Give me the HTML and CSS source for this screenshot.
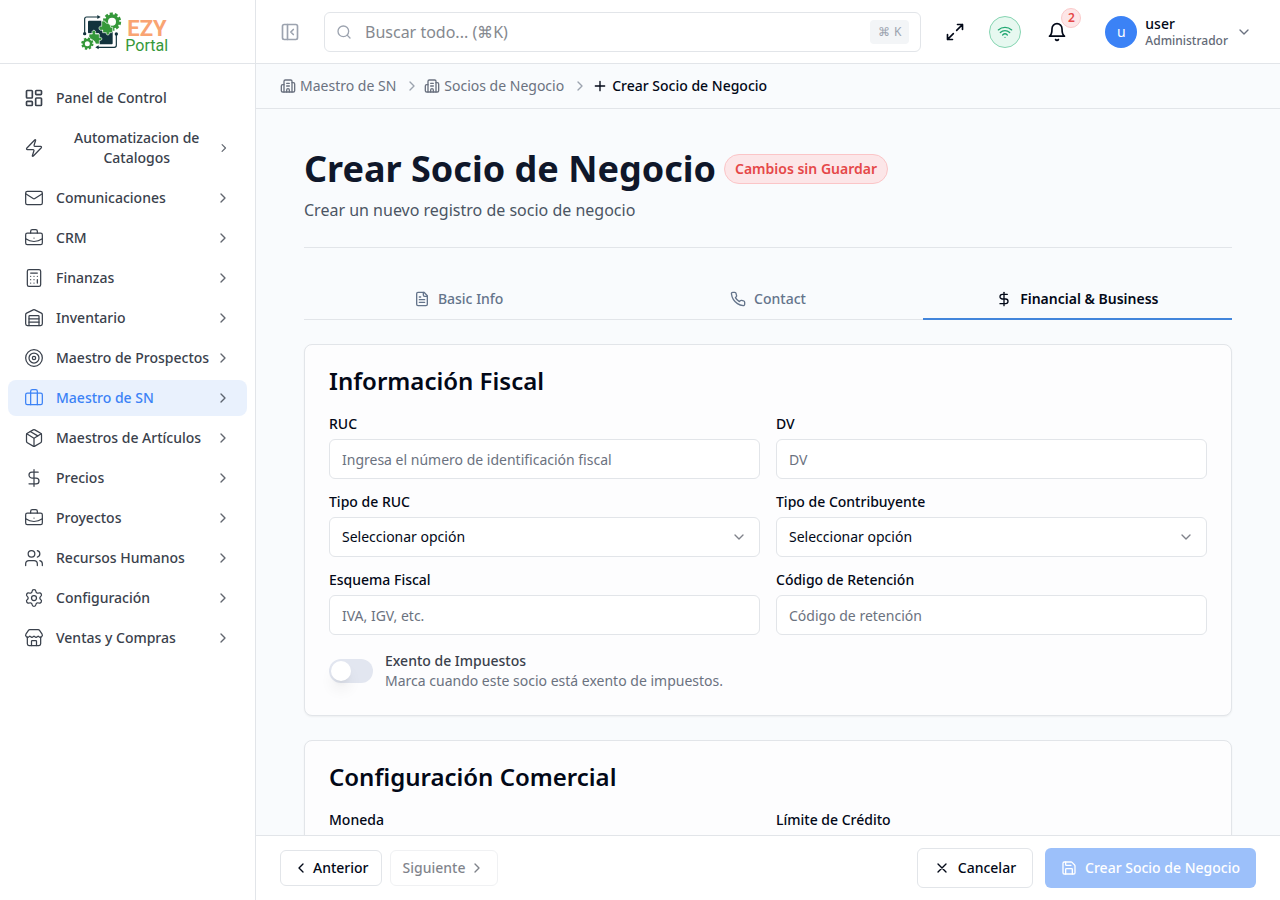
FILE: index.html
```html
<!DOCTYPE html>
<html lang="es">
<head>
<meta charset="utf-8">
<meta name="viewport" content="width=device-width, initial-scale=1">
<title>Crear Socio de Negocio - EZY Portal</title>
<link rel="stylesheet" href="styles.css">
</head>
<body>
<svg class="sprite" aria-hidden="true">
  <symbol id="i-dashboard" viewBox="0 0 24 24"><rect width="7" height="9" x="3" y="3" rx="1"/><rect width="7" height="5" x="14" y="3" rx="1"/><rect width="7" height="9" x="14" y="12" rx="1"/><rect width="7" height="5" x="3" y="16" rx="1"/></symbol>
  <symbol id="i-zap" viewBox="0 0 24 24"><path d="M4 14a1 1 0 0 1-.78-1.63l9.9-10.2a.5.5 0 0 1 .86.46l-1.92 6.02A1 1 0 0 0 13 10h7a1 1 0 0 1 .78 1.63l-9.9 10.2a.5.5 0 0 1-.86-.46l1.92-6.02A1 1 0 0 0 11 14z"/></symbol>
  <symbol id="i-mail" viewBox="0 0 24 24"><rect width="20" height="16" x="2" y="4" rx="2"/><path d="m22 7-8.97 5.7a1.94 1.94 0 0 1-2.06 0L2 7"/></symbol>
  <symbol id="i-business" viewBox="0 0 24 24"><path d="M12 12h.01"/><path d="M16 6V4a2 2 0 0 0-2-2h-4a2 2 0 0 0-2 2v2"/><path d="M22 13a18.15 18.15 0 0 1-20 0"/><rect width="20" height="14" x="2" y="6" rx="2"/></symbol>
  <symbol id="i-calculator" viewBox="0 0 24 24"><rect width="16" height="20" x="4" y="2" rx="2"/><path d="M8 6h8M16 14v4M16 10h.01M12 10h.01M8 10h.01M12 14h.01M8 14h.01M12 18h.01M8 18h.01"/></symbol>
  <symbol id="i-warehouse" viewBox="0 0 24 24"><path d="M18 21V10a1 1 0 0 0-1-1H7a1 1 0 0 0-1 1v11"/><path d="M22 19a2 2 0 0 1-2 2H4a2 2 0 0 1-2-2V8a2 2 0 0 1 1.132-1.803l7.95-3.974a2 2 0 0 1 1.837 0l7.948 3.974A2 2 0 0 1 22 8z"/><path d="M6 13h12M6 17h12"/></symbol>
  <symbol id="i-target" viewBox="0 0 24 24"><circle cx="12" cy="12" r="10"/><circle cx="12" cy="12" r="6"/><circle cx="12" cy="12" r="2"/></symbol>
  <symbol id="i-briefcase" viewBox="0 0 24 24"><path d="M16 20V4a2 2 0 0 0-2-2h-4a2 2 0 0 0-2 2v16"/><rect width="20" height="14" x="2" y="6" rx="2"/></symbol>
  <symbol id="i-package" viewBox="0 0 24 24"><path d="M11 21.73a2 2 0 0 0 2 0l7-4A2 2 0 0 0 21 16V8a2 2 0 0 0-1-1.73l-7-4a2 2 0 0 0-2 0l-7 4A2 2 0 0 0 3 8v8a2 2 0 0 0 1 1.73z"/><path d="M12 22V12"/><path d="m3.3 7 7.703 4.734a2 2 0 0 0 1.994 0L20.7 7"/><path d="m7.5 4.27 9 5.15"/></symbol>
  <symbol id="i-dollar" viewBox="0 0 24 24"><path d="M12 2v20"/><path d="M17 5H9.5a3.5 3.5 0 0 0 0 7h5a3.5 3.5 0 0 1 0 7H6"/></symbol>
  <symbol id="i-users" viewBox="0 0 24 24"><path d="M16 21v-2a4 4 0 0 0-4-4H6a4 4 0 0 0-4 4v2"/><circle cx="9" cy="7" r="4"/><path d="M22 21v-2a4 4 0 0 0-3-3.87"/><path d="M16 3.13a4 4 0 0 1 0 7.75"/></symbol>
  <symbol id="i-settings" viewBox="0 0 24 24"><path d="M9.671 4.136a2.34 2.34 0 0 1 4.659 0 2.34 2.34 0 0 0 3.319 1.915 2.34 2.34 0 0 1 2.33 4.033 2.34 2.34 0 0 0 0 3.831 2.34 2.34 0 0 1-2.33 4.033 2.34 2.34 0 0 0-3.319 1.915 2.34 2.34 0 0 1-4.659 0 2.34 2.34 0 0 0-3.32-1.915 2.34 2.34 0 0 1-2.33-4.033 2.34 2.34 0 0 0 0-3.831A2.34 2.34 0 0 1 6.35 6.051a2.34 2.34 0 0 0 3.319-1.915"/><circle cx="12" cy="12" r="3"/></symbol>
  <symbol id="i-store" viewBox="0 0 24 24"><path d="M15 21v-5a1 1 0 0 0-1-1h-4a1 1 0 0 0-1 1v5"/><path d="M17.774 10.31a1.12 1.12 0 0 0-1.549 0 2.5 2.5 0 0 1-3.451 0 1.12 1.12 0 0 0-1.548 0 2.5 2.5 0 0 1-3.452 0 1.12 1.12 0 0 0-1.549 0 2.5 2.5 0 0 1-3.77-3.248l2.889-4.184A2 2 0 0 1 7 2h10a2 2 0 0 1 1.653.873l2.895 4.192a2.5 2.5 0 0 1-3.774 3.244"/><path d="M4 10.95V19a2 2 0 0 0 2 2h12a2 2 0 0 0 2-2v-8.05"/></symbol>
  <symbol id="i-right" viewBox="0 0 24 24"><path d="m9 18 6-6-6-6"/></symbol>
  <symbol id="i-left" viewBox="0 0 24 24"><path d="m15 18-6-6 6-6"/></symbol>
  <symbol id="i-down" viewBox="0 0 24 24"><path d="m6 9 6 6 6-6"/></symbol>
  <symbol id="i-panel" viewBox="0 0 24 24"><rect width="18" height="18" x="3" y="3" rx="2"/><path d="M9 3v18"/><path d="m16 15-3-3 3-3"/></symbol>
  <symbol id="i-search" viewBox="0 0 24 24"><circle cx="11" cy="11" r="8"/><path d="m21 21-4.3-4.3"/></symbol>
  <symbol id="i-expand" viewBox="0 0 24 24"><path d="M15 3h6v6M9 21H3v-6M21 3l-7 7M3 21l7-7"/></symbol>
  <symbol id="i-wifi" viewBox="0 0 24 24"><path d="M12 20h.01"/><path d="M2 8.82a15 15 0 0 1 20 0"/><path d="M5 12.859a10 10 0 0 1 14 0"/><path d="M8.5 16.429a5 5 0 0 1 7 0"/></symbol>
  <symbol id="i-bell" viewBox="0 0 24 24"><path d="M6 8a6 6 0 0 1 12 0c0 7 3 9 3 9H3s3-2 3-9"/><path d="M10.3 21a1.94 1.94 0 0 0 3.4 0"/></symbol>
  <symbol id="i-building" viewBox="0 0 24 24"><path d="M10 12h4M10 8h4"/><path d="M14 21v-3a2 2 0 0 0-4 0v3"/><path d="M6 10H4a2 2 0 0 0-2 2v7a2 2 0 0 0 2 2h16a2 2 0 0 0 2-2V9a2 2 0 0 0-2-2h-2"/><path d="M6 21V5a2 2 0 0 1 2-2h8a2 2 0 0 1 2 2v16"/></symbol>
  <symbol id="i-plus" viewBox="0 0 24 24"><path d="M5 12h14M12 5v14"/></symbol>
  <symbol id="i-file" viewBox="0 0 24 24"><path d="M15 2H6a2 2 0 0 0-2 2v16a2 2 0 0 0 2 2h12a2 2 0 0 0 2-2V7Z"/><path d="M14 2v4a2 2 0 0 0 2 2h4M10 9H8M16 13H8M16 17H8"/></symbol>
  <symbol id="i-phone" viewBox="0 0 24 24"><path d="M22 16.92v3a2 2 0 0 1-2.18 2 19.79 19.79 0 0 1-8.63-3.07 19.5 19.5 0 0 1-6-6 19.79 19.79 0 0 1-3.07-8.67A2 2 0 0 1 4.11 2h3a2 2 0 0 1 2 1.72 12.84 12.84 0 0 0 .7 2.81 2 2 0 0 1-.45 2.11L8.09 9.91a16 16 0 0 0 6 6l1.27-1.27a2 2 0 0 1 2.11-.45 12.84 12.84 0 0 0 2.81.7A2 2 0 0 1 22 16.92z"/></symbol>
  <symbol id="i-x" viewBox="0 0 24 24"><path d="M18 6 6 18M6 6l12 12"/></symbol>
  <symbol id="i-save" viewBox="0 0 24 24"><path d="M15.2 3a2 2 0 0 1 1.4.6l3.8 3.8a2 2 0 0 1 .6 1.4V19a2 2 0 0 1-2 2H5a2 2 0 0 1-2-2V5a2 2 0 0 1 2-2z"/><path d="M17 21v-7a1 1 0 0 0-1-1H8a1 1 0 0 0-1 1v7M7 3v4a1 1 0 0 0 1 1h7"/></symbol>
</svg>

<div class="app">
  <aside class="sidebar">
    <a class="brand" href="#" aria-label="EZY Portal">
      <svg class="logo" viewBox="240 24 288 144">
        <g fill="none" stroke="#12333d" stroke-width="3.5">
          <path d="M254 98V57q0-6 6-6h34M349 104v32q0 6-6 6h-49"/>
        </g>
        <g fill="#12333d">
          <circle cx="254" cy="101" r="5"/><circle cx="349" cy="102" r="5"/>
          <path d="M292 45l10 6-10 6zM296 136l-10 6 10 6z"/>
          <rect x="264" y="62" width="42" height="38" rx="3"/>
          <rect x="297" y="94" width="41" height="39" rx="3"/>
        </g>
        <circle cx="336" cy="65" r="23" fill="none" stroke="#35983a" stroke-width="9" stroke-dasharray="9 5.450"/>
        <circle cx="336" cy="65" r="17" fill="#fff" stroke="#35983a" stroke-width="10"/>
        <path d="M305 63h9q3 9 10 7 9 3 8 12h6v12q0 4-4 4h-6c3 9-12 9-9 0h-11v-8c-14 6-14-15-3-11z" fill="#35983a" stroke="#fff" stroke-width="2"/>
        <path d="M267 102h10c-6-15 15-15 9 0h12v11c10-5 10 12 0 8v11h-11q-2-9-9-12-8-3-11-10z" fill="#35983a" stroke="#fff" stroke-width="2"/>
        <circle cx="262" cy="131" r="15" fill="none" stroke="#35983a" stroke-width="7" stroke-dasharray="6.500 5.280"/>
        <circle cx="262" cy="131" r="11" fill="#fff" stroke="#35983a" stroke-width="7"/>
        <text class="logo-ezy" x="382" y="107">EZY</text>
        <text class="logo-portal" x="376" y="152">Portal</text>
      </svg>
    </a>
    <nav class="nav" aria-label="Principal">
      <a class="nav-item nav-home" href="#"><span class="nav-main"><svg class="icon icon-lg"><use href="#i-dashboard"/></svg><span>Panel de Control</span></span></a>
      <button class="nav-item" type="button"><span class="nav-main"><svg class="icon icon-lg"><use href="#i-zap"/></svg><span>Automatizacion de Catalogos</span></span><svg class="chev"><use href="#i-right"/></svg></button>
      <button class="nav-item" type="button"><span class="nav-main"><svg class="icon icon-lg"><use href="#i-mail"/></svg><span>Comunicaciones</span></span><svg class="chev"><use href="#i-right"/></svg></button>
      <button class="nav-item" type="button"><span class="nav-main"><svg class="icon icon-lg"><use href="#i-business"/></svg><span>CRM</span></span><svg class="chev"><use href="#i-right"/></svg></button>
      <button class="nav-item" type="button"><span class="nav-main"><svg class="icon icon-lg"><use href="#i-calculator"/></svg><span>Finanzas</span></span><svg class="chev"><use href="#i-right"/></svg></button>
      <button class="nav-item" type="button"><span class="nav-main"><svg class="icon icon-lg"><use href="#i-warehouse"/></svg><span>Inventario</span></span><svg class="chev"><use href="#i-right"/></svg></button>
      <button class="nav-item" type="button"><span class="nav-main"><svg class="icon icon-lg"><use href="#i-target"/></svg><span>Maestro de Prospectos</span></span><svg class="chev"><use href="#i-right"/></svg></button>
      <button class="nav-item is-active" type="button"><span class="nav-main"><svg class="icon icon-lg"><use href="#i-briefcase"/></svg><span>Maestro de SN</span></span><svg class="chev"><use href="#i-right"/></svg></button>
      <button class="nav-item" type="button"><span class="nav-main"><svg class="icon icon-lg"><use href="#i-package"/></svg><span>Maestros de Artículos</span></span><svg class="chev"><use href="#i-right"/></svg></button>
      <button class="nav-item" type="button"><span class="nav-main"><svg class="icon icon-lg"><use href="#i-dollar"/></svg><span>Precios</span></span><svg class="chev"><use href="#i-right"/></svg></button>
      <button class="nav-item" type="button"><span class="nav-main"><svg class="icon icon-lg"><use href="#i-business"/></svg><span>Proyectos</span></span><svg class="chev"><use href="#i-right"/></svg></button>
      <button class="nav-item" type="button"><span class="nav-main"><svg class="icon icon-lg"><use href="#i-users"/></svg><span>Recursos Humanos</span></span><svg class="chev"><use href="#i-right"/></svg></button>
      <button class="nav-item" type="button"><span class="nav-main"><svg class="icon icon-lg"><use href="#i-settings"/></svg><span>Configuración</span></span><svg class="chev"><use href="#i-right"/></svg></button>
      <button class="nav-item" type="button"><span class="nav-main"><svg class="icon icon-lg"><use href="#i-store"/></svg><span>Ventas y Compras</span></span><svg class="chev"><use href="#i-right"/></svg></button>
    </nav>
  </aside>

  <div class="page">
    <header class="topbar">
      <button class="icon-btn toggle" type="button" aria-label="Contraer menú"><svg class="icon icon-lg"><use href="#i-panel"/></svg></button>
      <label class="search">
        <svg class="icon"><use href="#i-search"/></svg>
        <input class="search-input" type="search" placeholder="Buscar todo... (⌘K)" aria-label="Buscar todo">
        <kbd class="kbd"><span>⌘</span><span>K</span></kbd>
      </label>
      <button class="icon-btn" type="button" aria-label="Pantalla completa"><svg class="icon icon-lg"><use href="#i-expand"/></svg></button>
      <button class="status" type="button" aria-label="Conectado"><svg class="icon"><use href="#i-wifi"/></svg></button>
      <button class="icon-btn bell" type="button" aria-label="Notificaciones"><svg class="icon icon-lg"><use href="#i-bell"/></svg><span class="count">2</span></button>
      <button class="user" type="button">
        <span class="avatar">u</span>
        <span class="user-text"><span class="user-name">user</span><span class="user-role">Administrador</span></span>
        <svg class="icon user-chev"><use href="#i-down"/></svg>
      </button>
    </header>

    <nav class="crumbs" aria-label="Ruta">
      <a class="crumb" href="#"><svg class="icon"><use href="#i-building"/></svg>Maestro de SN</a>
      <svg class="icon crumb-sep"><use href="#i-right"/></svg>
      <a class="crumb" href="#"><svg class="icon"><use href="#i-building"/></svg>Socios de Negocio</a>
      <svg class="icon crumb-sep"><use href="#i-right"/></svg>
      <span class="crumb is-current" aria-current="page"><svg class="icon"><use href="#i-plus"/></svg>Crear Socio de Negocio</span>
    </nav>

    <main class="content">
      <div class="heading">
        <div class="heading-row">
          <h1 class="title">Crear Socio de Negocio</h1>
          <span class="badge">Cambios sin Guardar</span>
        </div>
        <p class="subtitle">Crear un nuevo registro de socio de negocio</p>
      </div>

      <div class="tabs" role="tablist">
        <button class="tab" type="button" role="tab" aria-selected="false"><svg class="icon"><use href="#i-file"/></svg>Basic Info</button>
        <button class="tab" type="button" role="tab" aria-selected="false"><svg class="icon"><use href="#i-phone"/></svg>Contact</button>
        <button class="tab is-active" type="button" role="tab" aria-selected="true"><svg class="icon"><use href="#i-dollar"/></svg>Financial &amp; Business</button>
      </div>

      <section class="card">
        <h2 class="card-title">Información Fiscal</h2>
        <div class="fields">
          <div class="field"><label class="label" for="ruc">RUC</label><input class="control" id="ruc" type="text" placeholder="Ingresa el número de identificación fiscal"></div>
          <div class="field"><label class="label" for="dv">DV</label><input class="control" id="dv" type="text" placeholder="DV"></div>
          <div class="field"><label class="label" for="tipo-ruc">Tipo de RUC</label><div class="select"><select class="control" id="tipo-ruc"><option>Seleccionar opción</option></select><svg class="icon"><use href="#i-down"/></svg></div></div>
          <div class="field"><label class="label" for="tipo-contrib">Tipo de Contribuyente</label><div class="select"><select class="control" id="tipo-contrib"><option>Seleccionar opción</option></select><svg class="icon"><use href="#i-down"/></svg></div></div>
          <div class="field"><label class="label" for="esquema">Esquema Fiscal</label><input class="control" id="esquema" type="text" placeholder="IVA, IGV, etc."></div>
          <div class="field"><label class="label" for="retencion">Código de Retención</label><input class="control" id="retencion" type="text" placeholder="Código de retención"></div>
        </div>
        <div class="switch-row">
          <input class="switch" id="exento" type="checkbox" role="switch" aria-describedby="exento-ayuda">
          <div class="switch-text">
            <label class="switch-label" for="exento">Exento de Impuestos</label>
            <p class="switch-help" id="exento-ayuda">Marca cuando este socio está exento de impuestos.</p>
          </div>
        </div>
      </section>

      <section class="card">
        <h2 class="card-title">Configuración Comercial</h2>
        <div class="fields">
          <div class="field"><label class="label" for="moneda">Moneda</label><input class="control" id="moneda" type="text"></div>
          <div class="field"><label class="label" for="limite">Límite de Crédito</label><input class="control" id="limite" type="text"></div>
        </div>
      </section>
    </main>

    <footer class="actions">
      <div class="steps">
        <button class="btn btn-sm" type="button"><svg class="icon"><use href="#i-left"/></svg>Anterior</button>
        <button class="btn btn-sm" type="button" disabled>Siguiente<svg class="icon"><use href="#i-right"/></svg></button>
      </div>
      <div class="submit">
        <button class="btn" type="button"><svg class="icon"><use href="#i-x"/></svg>Cancelar</button>
        <button class="btn btn-primary" type="submit" disabled><svg class="icon"><use href="#i-save"/></svg>Crear Socio de Negocio</button>
      </div>
    </footer>
  </div>
</div>
</body>
</html>
```

FILE: styles.css
```css
:root {
  --ink: #020817;
  --text: #3a414c;
  --muted: #6b7280;
  --line: #e2e5e9;
  --blue: #3b82f6;
  --red: #e54848;
  --surface: #f9fbfd;
}

*, *::before, *::after { box-sizing: border-box; }

body {
  margin: 0;
  background: var(--surface);
  color: var(--ink);
  font: 400 14px/20px "Noto Sans", "Open Sans", sans-serif;
}

h1, h2, p { margin: 0; }
button, input, select, kbd { margin: 0; font: inherit; color: inherit; }
button { padding: 0; border: 0; background: none; cursor: pointer; }
a { color: inherit; text-decoration: none; }

.sprite { display: none; }

.icon, .chev {
  width: 16px;
  height: 16px;
  fill: none;
  stroke: currentColor;
  stroke-width: 2;
  stroke-linecap: round;
  stroke-linejoin: round;
}
.icon { flex: none; }
.icon-lg { width: 20px; height: 20px; }

.app { display: flex; height: 100vh; }

/* Sidebar */
.sidebar {
  flex: none;
  width: 256px;
  border-right: 1px solid var(--line);
  background: #fff;
}
.brand {
  display: flex;
  align-items: center;
  justify-content: center;
  height: 64px;
  border-bottom: 1px solid var(--line);
}
.logo { width: 96px; height: 48px; }
.logo-ezy { font: 700 66px Roboto, sans-serif; fill: #f9a473; }
.logo-portal { font: 400 48px Roboto, sans-serif; fill: #35983a; }

.nav {
  display: flex;
  flex-direction: column;
  gap: 4px;
  padding: 16px 8px;
}
.nav-item {
  display: flex;
  align-items: center;
  justify-content: space-between;
  padding: 8px 16px;
  border-radius: 8px;
  color: var(--text);
  font-weight: 500;
  text-align: center;
}
.nav-main { display: flex; align-items: center; gap: 12px; }
.nav-main .icon { stroke-width: 1.5; }
.nav-home .icon { stroke-width: 2; }
.nav-item.is-active { background: #e9f1fd; color: var(--blue); }
.chev { color: var(--text); opacity: .8; }

/* Top bar */
.page { display: flex; flex: 1; flex-direction: column; min-width: 0; }
.topbar {
  display: flex;
  flex: none;
  align-items: center;
  gap: 16px;
  height: 64px;
  padding: 0 16px;
  border-bottom: 1px solid var(--line);
  background: #fff;
}
.icon-btn {
  display: flex;
  flex: none;
  align-items: center;
  justify-content: center;
  width: 36px;
  height: 36px;
}
.toggle { color: #9ca3af; }
.search {
  display: flex;
  flex: 1;
  align-items: center;
  gap: 13px;
  min-width: 0;
  height: 40px;
  padding: 0 11px;
  border: 1px solid var(--line);
  border-radius: 6px;
  color: #9ca3af;
}
.search-input {
  flex: 1;
  min-width: 0;
  padding: 0;
  border: 0;
  background: none;
  outline: 0;
  font-size: 16px;
  line-height: 24px;
  color: var(--ink);
}
.search-input::placeholder { color: #85898f; opacity: 1; }
.kbd {
  display: flex;
  gap: 4px;
  padding: 2px 8px;
  border-radius: 4px;
  background: #f3f5f7;
  font-size: 12px;
}
.status {
  display: flex;
  flex: none;
  align-items: center;
  justify-content: center;
  width: 32px;
  height: 32px;
  border: 1px solid #86d5b2;
  border-radius: 50%;
  background: #e7f8f0;
  color: #22a873;
}
.bell { position: relative; width: 40px; }
.count {
  position: absolute;
  top: -6px;
  right: -4px;
  width: 20px;
  height: 20px;
  border: 1px solid #fbc9c9;
  border-radius: 50%;
  background: #fde6e7;
  color: var(--red);
  font-size: 12px;
  font-weight: 600;
  line-height: 18px;
}
.user {
  display: flex;
  flex: none;
  align-items: center;
  gap: 8px;
  padding: 0 12px;
  text-align: left;
}
.avatar {
  width: 32px;
  height: 32px;
  border-radius: 50%;
  background: var(--blue);
  color: #fff;
  line-height: 32px;
  text-align: center;
}
.user-text { display: grid; }
.user-name { font-weight: 500; line-height: 18px; }
.user-role { color: #636a76; font-size: 12px; font-weight: 500; line-height: 16px; }
.user-chev { color: var(--muted); }

/* Breadcrumbs */
.crumbs {
  display: flex;
  flex: none;
  align-items: center;
  gap: 4px;
  padding: 12px 24px;
  border-bottom: 1px solid var(--line);
  color: var(--muted);
}
.crumb { display: flex; align-items: center; gap: 4px; }
.crumb.is-current { color: var(--ink); font-weight: 500; }
.crumb-sep { margin-left: 4px; color: #9ca3af; }

/* Page content */
.content {
  flex: 1;
  min-height: 0;
  padding: 40px 48px 24px;
  overflow-y: auto;
  scrollbar-width: none;
}
.heading { padding-bottom: 25px; border-bottom: 1px solid var(--line); }
.heading-row { display: flex; align-items: center; gap: 8px; }
.title { color: #0f172a; font-size: 36px; font-weight: 700; line-height: 40px; }
.badge {
  padding: 4px 10px;
  border: 1px solid #fbc5c7;
  border-radius: 16px;
  background: #fce6e8;
  color: var(--red);
  font-weight: 600;
}
.subtitle { margin-top: 9px; color: #4b5563; font-size: 16px; line-height: 24px; }

.tabs {
  display: grid;
  grid-template-columns: repeat(3, 1fr);
  margin: 32px 0 24px;
  box-shadow: inset 0 -1px var(--line);
}
.tab {
  display: flex;
  align-items: center;
  justify-content: center;
  gap: 8px;
  height: 40px;
  border-bottom: 2px solid transparent;
  color: #64748b;
  font-weight: 500;
}
.tab.is-active { border-color: #4285db; color: var(--ink); font-weight: 600; }

.card {
  margin-bottom: 24px;
  padding: 24px;
  border: 1px solid var(--line);
  border-radius: 8px;
  background: #fdfdfe;
  box-shadow: 0 1px 2px rgb(0 0 0 / 5%);
}
.card-title { margin-bottom: 24px; font-size: 24px; font-weight: 600; line-height: 24px; }
.fields { display: grid; grid-template-columns: 1fr 1fr; gap: 16px; }
.field { display: grid; gap: 8px; }
.label { font-weight: 500; line-height: 14px; }
.control {
  width: 100%;
  height: 40px;
  padding: 0 12px;
  border: 1px solid var(--line);
  border-radius: 6px;
  background: #fff;
}
.control::placeholder { color: var(--muted); opacity: 1; }
.select { display: grid; align-items: center; }
.select > * { grid-area: 1 / 1; }
.select .control { appearance: none; }
.select .icon { justify-self: end; margin-right: 13px; opacity: .5; pointer-events: none; }

.switch-row { display: flex; align-items: center; gap: 12px; margin-top: 16px; }
.switch {
  display: flex;
  flex: none;
  align-items: center;
  appearance: none;
  width: 44px;
  height: 24px;
  margin: 0;
  padding: 2px;
  border-radius: 12px;
  background: #e2e6f0;
  cursor: pointer;
}
.switch::before {
  content: "";
  width: 20px;
  height: 20px;
  border-radius: 50%;
  background: #fff;
  box-shadow: 0 10px 15px -3px rgb(0 0 0 / 10%), 0 4px 6px -4px rgb(0 0 0 / 10%);
}
.switch:checked { justify-content: flex-end; background: var(--blue); }
.switch-label { display: block; color: var(--text); font-weight: 500; }
.switch-help { color: var(--muted); }

/* Action bar */
.actions {
  display: flex;
  flex: none;
  align-items: center;
  justify-content: space-between;
  padding: 12px 24px;
  border-top: 1px solid var(--line);
  background: #fff;
}
.steps { display: flex; align-items: center; gap: 8px; }
.submit { display: flex; gap: 12px; }
.btn {
  display: flex;
  align-items: center;
  gap: 8px;
  height: 40px;
  padding: 0 16px;
  border: 1px solid var(--line);
  border-radius: 6px;
  background: #fff;
  font-weight: 500;
}
.btn-sm { gap: 4px; height: 36px; padding: 0 12px; }
.btn:disabled { opacity: .5; cursor: default; }
.btn-primary { border: 0; background: var(--blue); color: #fff; }
```
